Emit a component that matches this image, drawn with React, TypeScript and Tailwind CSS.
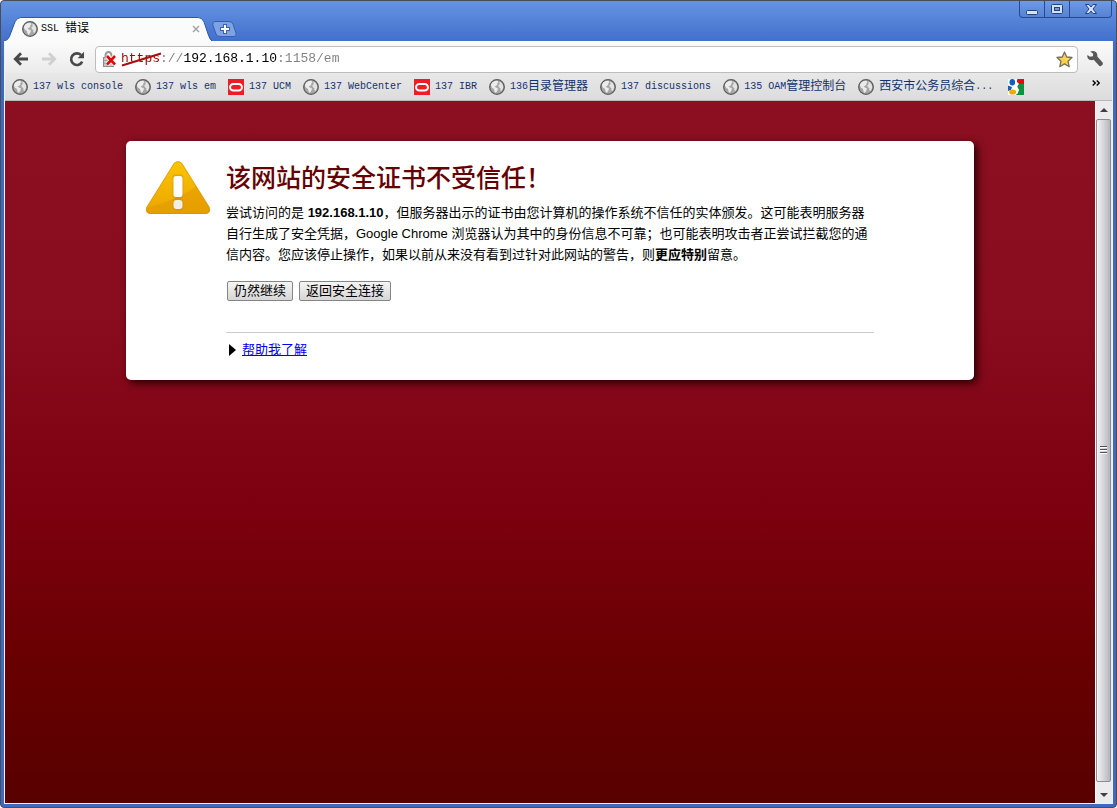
import React, { useState } from 'react';

type Bookmark = {
  icon: 'globe' | 'oracle' | 'google';
  title: string;
};

const bookmarks: Bookmark[] = [
  { icon: 'globe', title: '137 wls console' },
  { icon: 'globe', title: '137 wls em' },
  { icon: 'oracle', title: '137 UCM' },
  { icon: 'globe', title: '137 WebCenter' },
  { icon: 'oracle', title: '137 IBR' },
  { icon: 'globe', title: '136目录管理器' },
  { icon: 'globe', title: '137 discussions' },
  { icon: 'globe', title: '135 OAM管理控制台' },
  { icon: 'globe', title: '西安市公务员综合...' },
  { icon: 'google', title: '' },
];

const GlobeIcon = () => (
  <svg width="16" height="16" viewBox="0 0 16 16" className="shrink-0">
    <circle cx="8" cy="8" r="7.300" fill="#a6a6a6" stroke="#5c5c5c" strokeWidth="1.300" />
    <path d="M1.800 6 3.200 3.400 5.600 2 8.400 1.800 9.400 3.200 8.200 4.400 8.400 5.800 6.400 7.200 5.200 7.600 7 8.600 9 9.600 8.400 11.600 6.800 14 5.600 12.600 5 10 2.800 8.400Z" fill="#ececec" />
    <path d="M10.200 2.600 12.200 3.600 14 6.200 14.200 8.800 12.600 12 11.200 11 11.400 9 9.800 8.200 9.400 6.200 10.800 5Z" fill="#e4e4e4" />
  </svg>
);

const OracleIcon = () => (
  <svg width="16" height="16" viewBox="0 0 16 16" className="shrink-0">
    <rect width="16" height="16" fill="#ee1c25" />
    <rect x="2" y="5" width="12" height="6.600" rx="3.300" fill="none" stroke="#fff" strokeWidth="2" />
  </svg>
);

const GoogleIcon = () => (
  <svg width="16" height="16" viewBox="0 0 16 16" className="ml-[3px] shrink-0">
    <rect width="16" height="16" fill="#fff" />
    <path d="M9 0H16V5H11L9 3Z" fill="#dc1010" />
    <path d="M9 6.500 11 5H16V16H8L10.500 12Z" fill="#109040" />
    <path d="M0 6.500 4 8 3 11 0 12Z" fill="#1060c0" />
    <ellipse cx="4.300" cy="3.300" rx="2.800" ry="3.300" fill="#1060c0" />
    <path d="M7.500 0H9.400L8.600 3 10.600 5 9 8 11 10.500 9.500 15 7.800 14 8.200 10 5.600 8.400 7.400 5.400Z" fill="#fff" />
    <ellipse cx="4.600" cy="13" rx="3.500" ry="2.600" fill="#f4a800" />
  </svg>
);

const icons = { globe: GlobeIcon, oracle: OracleIcon, google: GoogleIcon };

// Latin runs are half the width of the Chinese ones
const Label: React.FC<{ text: string }> = ({ text }) => (
  <span className="flex items-center whitespace-pre text-[12px] leading-4">
    {(text.match(/[\x00-\x7f]+|[^\x00-\x7f]+/g) || []).map((run, i) => (
      <span key={i} className={run.charCodeAt(0) < 128 ? 'text-[10px]' : ''}>{run}</span>
    ))}
  </span>
);

const WindowButtons = () => (
  <div className="mr-px flex h-[17px] rounded-b border border-t-0 border-[#274a92] bg-linear-to-b from-[#6f9ae3] to-[#5583d4]">
    <button aria-label="最小化" className="flex w-[25px] items-center justify-center border-r border-[#274a92]">
      <svg width="12" height="12" viewBox="0 0 12 12">
        <rect x="0.5" y="7.500" width="11" height="4" rx="1" fill="#d5e1f7" stroke="#23427f" />
      </svg>
    </button>
    <button aria-label="最大化" className="flex w-[25px] items-center justify-center border-r border-[#274a92]">
      <svg width="12" height="11" viewBox="0 0 12 11">
        <rect x="0.5" y="0.5" width="11" height="9" rx="1" fill="#d5e1f7" stroke="#23427f" />
        <rect x="3.500" y="3.500" width="5" height="3" fill="#6f98df" stroke="#23427f" />
      </svg>
    </button>
    <button aria-label="关闭" className="flex w-[41px] items-center justify-center">
      <svg width="12" height="11" viewBox="0 0 12 11">
        <path d="M0.5 0.5H4L6 3 8 0.5H11.500L8 5 11.500 9.500H8L6 7 4 9.500H0.500L4 5Z" fill="#d5e1f7" stroke="#23427f" />
      </svg>
    </button>
  </div>
);

const TabStrip = () => (
  <div className="flex h-10 items-start justify-between">
    <div className="flex items-center self-end">
      <div className="relative flex h-6 w-[208px] items-center pr-3 pl-[18px]">
        <svg className="absolute inset-0 h-full w-full" viewBox="0 0 210 24" preserveAspectRatio="none">
          <path d="M0 24C4 23 5 21 6.500 17L11 5Q13 .5 17 .5H196Q200 .5 202 5L206 17Q208 23 210 24Z" fill="#fbfbfb" />
          <path d="M0 24C4 23 5 21 6.500 17L11 5Q13 .5 17 .5H196Q200 .5 202 5L206 17Q208 23 210 24" fill="none" stroke="#2c56a8" />
        </svg>
        <span className="relative flex flex-1 items-center gap-[3px]">
          <GlobeIcon />
          <Label text="SSL 错误" />
        </span>
        <button aria-label="关闭标签页" className="relative">
          <svg width="8" height="8" viewBox="0 0 8 8">
            <path d="M1 1 7 7M7 1 1 7" stroke="#a5a5a5" strokeWidth="1.500" />
          </svg>
        </button>
      </div>
      <button aria-label="打开新的标签页">
        <svg width="25" height="16" viewBox="0 0 25 16">
          <path d="M3 .5H17Q20 .5 21 3L24 12Q25 15.500 22 15.500H8Q5 15.500 4 13L.8 4Q0 .5 3 .5Z" fill="#7fa3e2" stroke="#3460b4" />
          <path d="M13 3V13M8 8H18" stroke="#3d62a8" strokeWidth="4" />
          <path d="M13 4V12M9 8H17" stroke="#fff" strokeWidth="2" />
        </svg>
      </button>
    </div>
    <WindowButtons />
  </div>
);

const Toolbar = () => {
  const [url, setUrl] = useState('https://192.168.1.10:1158/em');

  return (
    <div className="flex h-8 items-center bg-linear-to-b from-[#fbfbfb] to-[#ebebeb] pt-1 pr-[9px] pl-2">
      <div className="flex w-[82px] items-center gap-3">
        <button aria-label="后退">
          <svg width="16" height="16" viewBox="0 0 16 16">
            <path d="M15 8H3M8 2.300 2.300 8 8 13.700" fill="none" stroke="#484848" strokeWidth="2.800" />
          </svg>
        </button>
        <button aria-label="前进" disabled>
          <svg width="16" height="16" viewBox="0 0 16 16">
            <path d="M1 8H13M8 2.300 13.700 8 8 13.700" fill="none" stroke="#d0d0d0" strokeWidth="2.800" />
          </svg>
        </button>
        <button aria-label="重新加载">
          <svg width="16" height="16" viewBox="0 0 16 16">
            <path d="M13.200 10.600A5.800 5.800 0 1 1 12 4" fill="none" stroke="#484848" strokeWidth="2.600" />
            <path d="M15 .8V7.200H8.600Z" fill="#484848" />
          </svg>
        </button>
      </div>
      <div className="flex h-[27px] min-w-0 flex-1 items-center rounded border border-[#bdbdbd] bg-white pr-1 pl-[6px]">
        <svg width="16" height="16" viewBox="0 0 16 16" className="mr-[3px] shrink-0">
          <path d="M3.500 7V4.500A3 3.500 0 0 1 9.500 4.500V7" fill="none" stroke="#999" strokeWidth="2" />
          <rect x="1.500" y="6.500" width="10" height="9" fill="#c9c9c9" stroke="#8c8c8c" />
          <path d="M2 9.500H11M2 12.500H11" stroke="#a5a5a5" />
          <path d="M5 5 13 13.500M13 5 5 13.500" stroke="#fff" strokeWidth="4.500" />
          <path d="M5 5 13 13.500M13 5 5 13.500" stroke="#e00a0a" strokeWidth="2.600" />
        </svg>
        <div className="relative min-w-0 flex-1">
          <input
            aria-label="地址"
            value={url}
            onChange={(e) => setUrl(e.target.value)}
            className="block w-full bg-[linear-gradient(90deg,#a30000_5ch,#808080_5ch,#808080_8ch,#000_8ch,#000_20ch,#808080_20ch)] bg-clip-text text-[13px] leading-5 text-transparent caret-black outline-none"
          />
          <svg className="pointer-events-none absolute top-[3px] left-0" width="41" height="15" viewBox="0 0 41 15">
            <path d="M1 13.500 40 1.500" stroke="#a80f0f" strokeWidth="2" />
          </svg>
        </div>
        <button aria-label="修改书签">
          <svg width="17" height="17" viewBox="0 0 17 17">
            <path d="M8.500 1 10.700 6 16 6.500 12 10.200 13.200 15.700 8.500 12.900 3.800 15.700 5 10.200 1 6.500 6.300 6Z" fill="#fbd04e" stroke="#75705f" strokeWidth="1.300" strokeLinejoin="round" />
            <path d="M8.500 4 9.900 7.200 13 7.500 10.500 9.600Z" fill="#ffe08c" />
          </svg>
        </button>
      </div>
      <button aria-label="设置" className="ml-[9px]">
        <svg width="16" height="16" viewBox="0 0 16 16">
          <path d="M3.200 .6 6.200 0C9 .2 10.800 2.400 10.300 5.500L15.600 11.600Q16.300 12.800 15.300 14 14 15.600 12.400 15L6.700 8.800C4 9.800 1.200 8.700 .3 5.900L.4 4 3 5.800 5.900 5.200 6.200 2.800Z" fill="#585858" />
        </svg>
      </button>
    </div>
  );
};

const BookmarkBar = () => (
  <nav className="flex h-7 items-center justify-between border-b border-[#b4b7be] bg-linear-to-b from-[#e8e8e8] to-[#dcdcdc] pr-3 pl-[7px] text-[#12316f]">
    <div className="flex min-w-0 items-center gap-3">
      {bookmarks.map((b, i) => {
        const Icon = icons[b.icon];
        return (
          <a key={i} href="#" aria-label={b.title || 'Google'} className="flex items-center gap-[5px]">
            <Icon />
            <Label text={b.title} />
          </a>
        );
      })}
    </div>
    <button aria-label="更多书签" className="mb-2">
      <svg width="8" height="6" viewBox="0 0 8 6">
        <path d="M.7 .5 3.300 3 .7 5.500M4.700 .5 7.300 3 4.700 5.500" fill="none" stroke="#000" strokeWidth="1.400" />
      </svg>
    </button>
  </nav>
);

const WarningIcon = () => (
  <svg width="64" height="54" viewBox="0 0 64 54" className="shrink-0">
    <defs>
      <linearGradient id="warn" x1="0" y1="0" x2="0" y2="1">
        <stop offset="0" stopColor="#fbc400" />
        <stop offset="1" stopColor="#eba600" />
      </linearGradient>
    </defs>
    <path d="M28 2Q32-1.500 36 2L63.500 46Q65.500 52 60 53H4Q-1.500 52 .5 46Z" fill="url(#warn)" />
    <path d="M1.500 46.500Q34 38 50 25L63 46Q64.500 52 60 53H4Q-.5 52 1.500 46.500Z" fill="#df9200" fillOpacity="0.45" />
    <path d="M28.300 2.300Q32-1 35.700 2.300L63 46.200Q64.500 51.600 59.800 52.500H4.200Q-.5 51.600 1 46.200Z" fill="none" stroke="#d99000" strokeOpacity="0.600" />
    <rect x="26.500" y="13.500" width="11" height="24" rx="3" fill="#c78400" fillOpacity="0.400" />
    <rect x="26.500" y="37.500" width="11" height="12" rx="4" fill="#c78400" fillOpacity="0.400" />
    <rect x="27.500" y="15" width="9" height="21" rx="2.500" fill="#fff" />
    <rect x="27.500" y="39" width="9" height="9" rx="3" fill="#f1eee6" />
  </svg>
);

const WarningCard = () => (
  <section className="mx-auto flex w-full max-w-[848px] items-start gap-4 rounded-[5px] bg-white p-5 pr-[100px] text-[13px] leading-[21px] shadow-[3px_3px_8px_#220000]">
    <WarningIcon />
    <div className="min-w-0 flex-1">
      <h1 className="text-[25px] leading-[34px] font-medium text-[#660000]">该网站的安全证书不受信任！</h1>
      <p className="mt-[7px]">
        尝试访问的是 <b>192.168.1.10</b>，但服务器出示的证书由您计算机的操作系统不信任的实体颁发。这可能表明服务器自行生成了安全凭据，Google Chrome 浏览器认为其中的身份信息不可靠；也可能表明攻击者正尝试拦截您的通信内容。您应该停止操作，如果以前从来没有看到过针对此网站的警告，则<b>更应特别</b>留意。
      </p>
      <div className="mt-4 flex gap-[6px] px-px leading-[18px]">
        <button className="rounded-xs border border-[#858585] bg-linear-to-b from-[#f5f5f5] to-[#d6d6d6] px-[6px]">仍然继续</button>
        <button className="rounded-xs border border-[#858585] bg-linear-to-b from-[#f5f5f5] to-[#d6d6d6] px-[6px]">返回安全连接</button>
      </div>
      <div className="mt-[31px] flex items-center gap-[6px] border-t border-[#ccc] pt-[6px] pl-[3px]">
        <svg width="7" height="12" viewBox="0 0 7 12">
          <path d="M0 0 7 6 0 12Z" fill="#000" />
        </svg>
        <a href="#" className="text-[#0000ee] underline">帮助我了解</a>
      </div>
    </div>
  </section>
);

const Scrollbar = () => (
  <div className="flex w-[17px] flex-col border-l border-white bg-[#ececef] pr-px">
    <button aria-label="向上滚动" className="flex h-[18px] items-center justify-center">
      <svg width="8" height="4" viewBox="0 0 8 4"><path d="M4 0 8 4H0Z" fill="#404040" /></svg>
    </button>
    <div className="flex flex-1 items-center justify-center rounded-xs border border-[#8c8c94] bg-linear-to-r from-[#f4f4f6] via-[#d5d5da] to-[#b5b5bc]">
      <svg width="7" height="9" viewBox="0 0 7 9">
        <path d="M0 .5H7M0 3.500H7M0 6.500H7" stroke="#505058" />
        <path d="M0 1.500H7M0 4.500H7M0 7.500H7" stroke="#fff" />
      </svg>
    </div>
    <button aria-label="向下滚动" className="flex h-[21px] items-center justify-center pt-1">
      <svg width="8" height="4" viewBox="0 0 8 4"><path d="M0 0H8L4 4Z" fill="#404040" /></svg>
    </button>
  </div>
);

const App: React.FC = () => (
  <div className="bg-white">
    <div className="flex min-h-screen flex-col rounded border border-[#4a4d55] bg-[#3f6cc5] bg-[linear-gradient(#6694e2,#4270cc_40px,#3d69c0_60px)] px-[3px] pb-[3px] font-['Liberation_Mono','Noto_Sans_CJK_SC',monospace]">
      <TabStrip />
      <div className="flex flex-1 flex-col border-x border-b border-[#f1f1f1]">
        <Toolbar />
        <BookmarkBar />
        <div className="flex flex-1">
          <main className="min-w-0 flex-1 bg-[linear-gradient(#8b0f20,#8a0d1f_30%,#7d0010_58%,#680000_80%,#580000)] px-6 pt-10 font-['Liberation_Sans','Noto_Sans_CJK_SC',sans-serif] text-black">
            <WarningCard />
          </main>
          <Scrollbar />
        </div>
      </div>
    </div>
  </div>
);

export default App;
